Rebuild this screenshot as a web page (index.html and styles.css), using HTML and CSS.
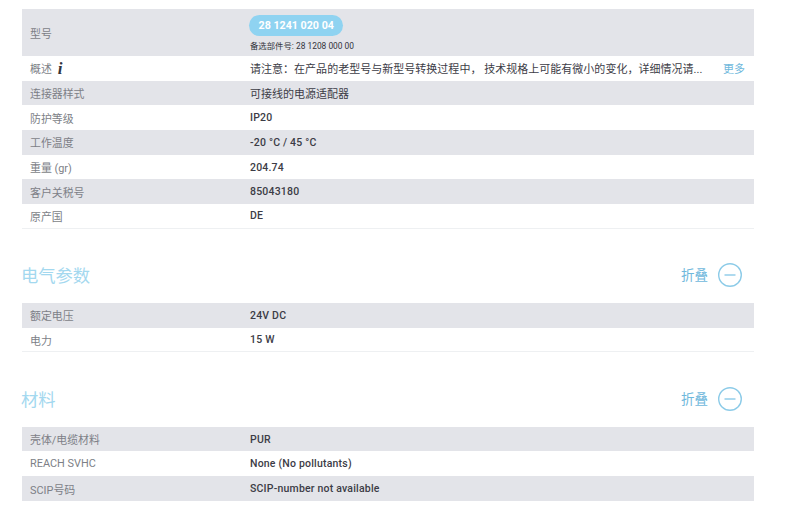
FILE: index.html
```html
<!DOCTYPE html>
<html lang="zh">
<head>
<meta charset="utf-8">
<title>28 1241 020 04</title>
<link rel="stylesheet" href="styles.css">
</head>
<body>
<main class="page">
  <section class="spec">
    <div class="row row-tall shade">
      <div class="label">型号</div>
      <div class="value value-stack">
        <span class="pill">28 1241 020 04</span>
        <span class="alt">备选部件号: 28 1208 000 00</span>
      </div>
    </div>
    <div class="row">
      <div class="label">概述<span class="info">i</span></div>
      <div class="value value-more"><span class="clip">请注意：在产品的老型号与新型号转换过程中， 技术规格上可能有微小的变化，详细情况请...</span><a class="more">更多</a></div>
    </div>
    <div class="row shade"><div class="label">连接器样式</div><div class="value cjk">可接线的电源适配器</div></div>
    <div class="row"><div class="label">防护等级</div><div class="value">IP20</div></div>
    <div class="row shade"><div class="label">工作温度</div><div class="value">-20 °C / 45 °C</div></div>
    <div class="row"><div class="label">重量 (gr)</div><div class="value">204.74</div></div>
    <div class="row shade"><div class="label">客户关税号</div><div class="value">85043180</div></div>
    <div class="row rule"><div class="label">原产国</div><div class="value">DE</div></div>
  </section>

  <header class="head">
    <h2>电气参数</h2>
    <div class="fold">折叠<svg class="minus" viewBox="0 0 24 24" width="24" height="24"><circle cx="12" cy="12" r="11.3" /><path d="M6.5 12h11"/></svg></div>
  </header>
  <section class="spec">
    <div class="row shade"><div class="label">额定电压</div><div class="value">24V DC</div></div>
    <div class="row rule"><div class="label">电力</div><div class="value">15 W</div></div>
  </section>

  <header class="head">
    <h2>材料</h2>
    <div class="fold">折叠<svg class="minus" viewBox="0 0 24 24" width="24" height="24"><circle cx="12" cy="12" r="11.3" /><path d="M6.5 12h11"/></svg></div>
  </header>
  <section class="spec">
    <div class="row shade"><div class="label">壳体/电缆材料</div><div class="value">PUR</div></div>
    <div class="row"><div class="label">REACH SVHC</div><div class="value">None (No pollutants)</div></div>
    <div class="row shade"><div class="label">SCIP号码</div><div class="value">SCIP-number not available</div></div>
  </section>
</main>
</body>
</html>
```
FILE: styles.css
```css
* { box-sizing: border-box; }
html, body { margin: 0; background: #fff; }
body {
  height: 511px;
  overflow: hidden;
  font-family: Roboto, "Noto Sans CJK SC", sans-serif;
  font-size: 10.5px;
  color: #3c3c46;
}
.page { width: 732px; margin-left: 22px; padding-top: 9px; }
.row { display: flex; align-items: center; height: 24.7px; }
.row-tall { height: 47px; }
.shade { background: #e3e4e9; }
.rule { border-bottom: 1px solid #eef0f2; }
.label { width: 228px; padding-left: 8px; font-size: 10.9px; color: #7d7f87; display: flex; align-items: center; }
.value { flex: 1; font-weight: 500; min-width: 0; letter-spacing: .2px; }
.value.cjk { font-size: 11px; font-weight: 400; letter-spacing: 0; }
.value-stack { display: flex; flex-direction: column; align-items: flex-start; gap: 3px; font-weight: 400; letter-spacing: 0; }
.pill {
  margin-left: -1px;
  background: #8fd3f1;
  color: #fff;
  font-weight: 700;
  font-size: 10.7px;
  height: 21px;
  line-height: 21px;
  padding: 0 9.5px;
  border-radius: 11px;
}
.alt { font-size: 8.4px; color: #33343c; }
.value-more { display: flex; justify-content: space-between; font-size: 11px; font-weight: 400; letter-spacing: 0; padding-right: 9px; }
.clip { white-space: nowrap; letter-spacing: .02px; }
.more { color: #6fb8dc; }
.info { font-family: "Liberation Serif", serif; font-style: italic; font-weight: 700; font-size: 17px; color: #33343c; margin-left: 6px; line-height: 1; }
.head { display: flex; justify-content: space-between; align-items: center; height: 74.3px; padding: 18px 12px 0 0; }
.head h2 { margin: 0 0 0 -1px; font-size: 17.3px; font-weight: 400; color: #a3d8ef; }
.fold { display: flex; align-items: center; gap: 10px; font-size: 13.5px; line-height: 24px; color: #6fb8dc; }
.fold svg { flex: none; }
.minus { fill: none; stroke: #8ccbe8; stroke-width: 1.4; }
```
